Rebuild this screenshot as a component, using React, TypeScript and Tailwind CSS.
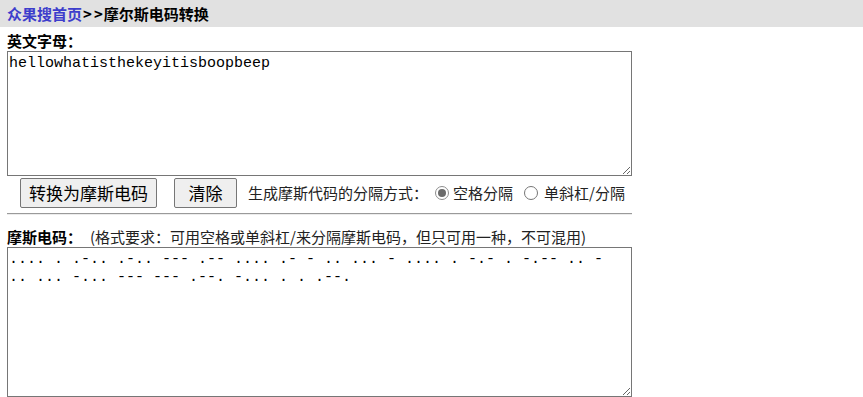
import React from "react";

const CJK = "font-['Microsoft_YaHei','Noto_Sans_CJK_SC',sans-serif]";

function Radio({ checked }: { checked?: boolean }) {
  return (
    <svg width="14" height="14" viewBox="0 0 14 14" className="shrink-0">
      <circle cx="7" cy="7" r="6.5" fill="#fff" stroke={checked ? "#8d8d8d" : "#767676"} strokeWidth="1" />
      {checked && <circle cx="7" cy="7" r="4" fill="#6b6b6b" />}
    </svg>
  );
}

export default function App() {
  const morse =
    ".... . .-.. .-.. --- .-- .... .- - .. ... - .... . -.- . -.-- .. - .. ... -... --- --- .--. -... . . .--.";
  return (
    <div className={`h-[397px] w-[863px] overflow-hidden bg-white text-black ${CJK}`}>
      <div className="h-[27px] bg-[#e1e1e1] pl-[7px] flex items-center text-[15px] font-bold leading-[20px]">
        <a href="#" className="text-[#3d3dcc]">众果搜首页</a>
        <span className="ml-[1px]">&gt;</span>
        <span className="ml-[2px]">&gt;</span>
        <span className="ml-[1px]">摩尔斯电码转换</span>
      </div>
      <div className="pl-[7px]">
        <div className="h-[24px] pt-[4px] text-[15px] font-bold leading-[20px]">英文字母：</div>
        <textarea
          defaultValue="hellowhatisthekeyitisboopbeep"
          className="block w-[625px] h-[125px] border border-[#767676] bg-white pl-[1px] pr-[4px] pt-[3px] font-['Liberation_Mono',monospace] text-[15px] leading-[18px] text-black outline-none"
        />
        <div className="mt-[2px] h-[30px] flex items-center text-[15px] leading-[20px]">
          <button className="ml-[13px] w-[137px] h-[30px] bg-[#efefef] border border-[#767676] rounded-[2px] text-[17px] flex items-center justify-center">
            转换为摩斯电码
          </button>
          <button className="ml-[17px] w-[63px] h-[30px] bg-[#efefef] border border-[#767676] rounded-[2px] text-[17px] flex items-center justify-center">
            清除
          </button>
          <span className="ml-[11px] text-[#222]">生成摩斯代码的分隔方式：</span>
          <span className="ml-[7px] flex items-center">
            <Radio checked />
          </span>
          <span className="ml-[4px] text-[#222]">空格分隔</span>
          <span className="ml-[11px] flex items-center">
            <Radio />
          </span>
          <span className="ml-[6px] text-[#222]">单斜杠/分隔</span>
        </div>
        <div className="mt-[5px] w-[625px] h-[2px] border-t border-t-[#9a9a9a] border-b border-b-[#ececec]" />
        <div className="mt-[12px] h-[20px] flex items-center leading-[20px]">
          <span className="text-[15px] font-bold">摩斯电码：</span>
          <span className="ml-[8px] text-[15px] text-[#222]">(格式要求：可用空格或单斜杠/来分隔摩斯电码，但只可用一种，不可混用)</span>
        </div>
        <textarea
          defaultValue={morse}
          className="block w-[625px] h-[150px] border border-[#767676] bg-white pl-[1px] pr-[4px] pt-[3px] font-['Liberation_Mono',monospace] text-[15px] leading-[18px] text-black outline-none"
        />
      </div>
    </div>
  );
}
